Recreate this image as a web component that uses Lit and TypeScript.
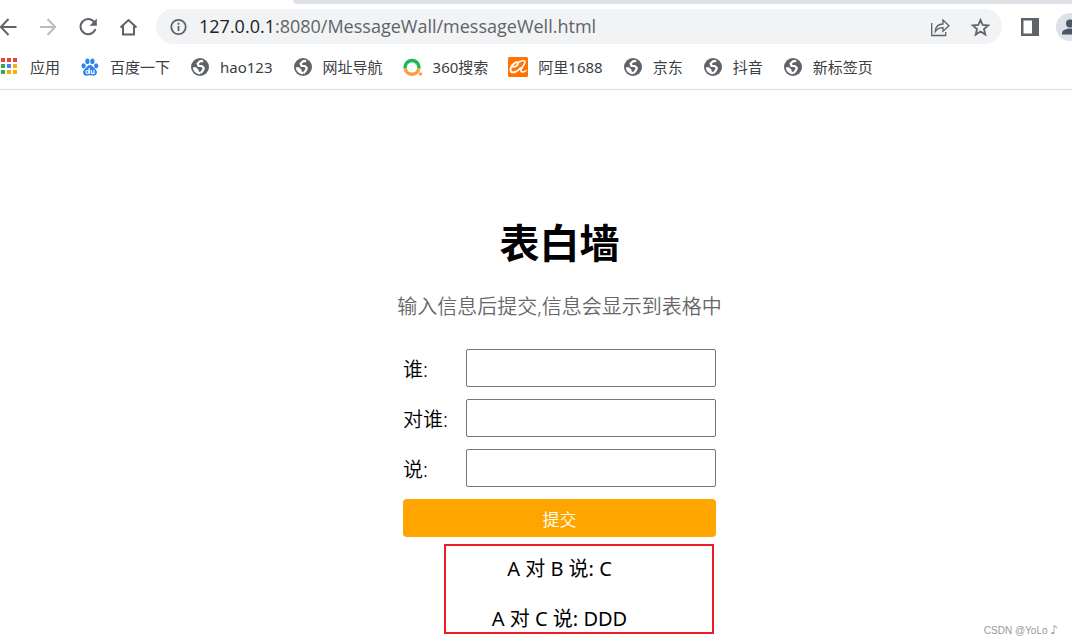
import { LitElement, html, css, svg } from "lit";
import { customElement, state } from "lit/decorators.js";

const globe = svg`<circle cx="10" cy="10" r="9" fill="#5f6368"/>
  <path fill="none" stroke="#fff" stroke-width="2.200" stroke-linejoin="round" d="M13.200 4.200H10.300L7.600 6.500l1 2.500h3.200l2 2-1 2.600-2.300 2.600"/>
  <path fill="#fff" d="M2.800 10.200H6l2.600 2.500v1.600l1.600 1v2.100A7.300 7.300 0 0 1 2.800 10.200z"/>`;

const icons: Record<string, unknown> = {
  apps: svg`${["#ea4335", "#ea4335", "#ea4335", "#34a853", "#4285f4", "#fbaf05", "#34a853", "#fbaf05", "#fbaf05"].map(
    (c, i) => svg`<rect x=${1 + (i % 3) * 6} y=${1 + Math.floor(i / 3) * 6} width="4" height="4" fill=${c}/>`
  )}`,
  baidu: svg`<g fill="#2f82f5"><ellipse cx="3.600" cy="8.800" rx="2.100" ry="2.600"/><ellipse cx="7.400" cy="4.200" rx="2.100" ry="2.800"/><ellipse cx="12.400" cy="4.200" rx="2.100" ry="2.800"/><ellipse cx="16.200" cy="8.800" rx="2.100" ry="2.600"/><path d="M10 8c2.400 0 2.900 2 4.800 3.500 3.700 3 2 7.200-1.200 7.200-1.500 0-2-.4-3.600-.4s-2.100.4-3.600.4c-3.200 0-4.900-4.200-1.200-7.200C7.100 10 7.600 8 10 8z"/></g>
    <g fill="none" stroke="#fff" stroke-width="1.200"><path d="M9.200 11v6"/><circle cx="7.500" cy="15" r="1.500"/><path d="M11.300 13v2.200c0 1.800 2.700 1.800 2.700 0V13v4"/></g>`,
  globe,
  so: svg`<g fill="none" stroke-width="3.400"><path d="M2.200 11.500A6.900 6.900 0 1 1 15.800 11.500" stroke="#19b955"/><path d="M2.200 11.500A6.900 6.900 0 0 0 15.800 11.500" stroke="#fd9f3e"/></g><circle cx="17.500" cy="17" r="1.800" fill="#fd9f3e"/>`,
  ali: svg`<rect width="20" height="20" rx="1.500" fill="#ff7300"/>
    <g fill="none" stroke="#fff" stroke-linecap="round" stroke-linejoin="round"><path stroke-width="1.900" d="M4.500 9.800C8 10 10.300 8 9.800 6 9 4 4.500 6.500 2.800 11c-1.200 4 1.200 5 4.200 4 2.300-.8 4-2.200 5.500-4"/><path stroke-width="1.600" d="M9.500 6C12 4 16 3 17 4.300c.8 1.600-3.500 6-4 8.700-.3 2.600 2.700 2.600 5.200.5"/></g>`,
};

@customElement("app-root")
export class AppRoot extends LitElement {
  static styles = css`
    :host { display: block; overflow: hidden; background: #fff; color: #000;
      font-family: "Noto Sans", "Noto Sans CJK SC", sans-serif; font-size: 20px; }
    * { box-sizing: border-box; }
    svg { display: block; flex: none; }
    button { font-family: inherit; cursor: pointer; }
    .tabs { height: 4px; margin-left: 293px; background: #dee1e6; border-bottom-left-radius: 8px; }
    .toolbar { display: flex; align-items: center; gap: 16px; height: 45px; margin: 0 -12px 0 -4px; }
    .icon { display: block; flex: none; padding: 0; border: 0; background: none; width: 24px; height: 24px; color: #5f6368; }
    .faded { color: #babcbe; }
    .profile { display: flex; align-items: center; gap: 14px; }
    .avatar { width: 28px; height: 28px; }
    .omnibox { flex: 1; min-width: 0; height: 35px; padding: 0 10px 0 12px; border-radius: 18px; background: #f1f3f4;
      display: flex; align-items: center; gap: 16px; }
    .site { flex: 1; display: flex; align-items: center; gap: 11px; min-width: 0; color: #5f6368; }
    .url { font-family: "Open Sans", sans-serif; font-size: 18px; line-height: 24px; padding-bottom: 2px; white-space: nowrap; }
    .host { color: #202124; }
    .bookmarks { display: flex; gap: 20px; align-items: center; height: 41px; padding-bottom: 4px;
      border-bottom: 1px solid #dadce0; }
    .bookmark { display: flex; align-items: center; gap: 10px; font-size: 15px; line-height: 20px; color: #3c4043;
      text-decoration: none; white-space: nowrap; }
    .page { padding: 123px 0 0 47px; display: flex; flex-direction: column; align-items: center; }
    h1 { margin: 0; font-size: 40px; line-height: 60px; font-weight: 700; }
    .hint { margin: 18px 0 0; line-height: 32px; color: #666; font-weight: 350; }
    .form { display: grid; gap: 12px; margin-top: 26px; }
    .row { display: grid; grid-template-columns: 63px 250px; align-items: center; }
    .row label { line-height: 34px; padding-top: 4px; font-weight: 350; }
    .field { height: 38px; width: 100%; border: 1px solid #767676; border-radius: 2px; padding: 1px 4px; font: inherit; background: #fff; }
    .submit { height: 38px; border: 0; border-radius: 4px; background: orange; color: #fff; font-size: 17px; font-weight: 350; padding: 0; }
    .messages { position: relative; width: 313px; padding-top: 7px; text-align: center; }
    .message { margin: 0; line-height: 50px; }
    .frame { position: absolute; inset: 7px 2px 10px 41px; border: 2px solid #ed1c24; pointer-events: none; }
    .credit { position: absolute; right: 14px; bottom: 6px; font: 10px/14px "Liberation Sans", sans-serif; color: #999; }
    .note { font: italic 700 12px/14px "DejaVu Sans", sans-serif; }
  `;

  @state() private messages = [
    { from: "A", to: "B", text: "C" },
    { from: "A", to: "C", text: "DDD" },
  ];

  private submit(e: Event) {
    e.preventDefault();
    const form = e.target as HTMLFormElement;
    const data = new FormData(form);
    const [from, to, text] = ["from", "to", "text"].map((k) => String(data.get(k) ?? ""));
    if (!from || !to || !text) return;
    this.messages = [...this.messages, { from, to, text }];
    form.reset();
  }

  private tool(label: string, art: unknown, extra = "") {
    return html`<button class="icon ${extra}" aria-label=${label}><svg width="24" height="24" viewBox="0 0 24 24" fill="none" stroke="currentColor" stroke-width="2">${art}</svg></button>`;
  }

  private bookmark(icon: string, label: string) {
    return html`<a class="bookmark" href="#"><svg width="20" height="20" viewBox="0 0 20 20">${icons[icon]}</svg><span>${label}</span></a>`;
  }

  private row(name: string, label: string) {
    return html`<div class="row"><label for=${name}>${label}</label><input class="field" id=${name} name=${name} type="text" /></div>`;
  }

  render() {
    return html`
      <div class="tabs"></div>
      <div class="toolbar">
        ${this.tool("后退", svg`<path d="M20.500 12H5M12.500 4 4.800 12l7.700 8"/>`)}
        ${this.tool("前进", svg`<path d="M4 12h15M11.500 4l7.700 8-7.700 8"/>`, "faded")}
        ${this.tool("重新加载", svg`<path d="M18.500 7.500A7.600 7.600 0 1 0 19.400 14"/><path d="M20.800 3.500v7.300h-7.300z" fill="currentColor" stroke="none"/>`)}
        ${this.tool("主页", svg`<path d="M4.500 12.500 12.500 5l8 7.500M7 10.500v9h11v-9"/>`)}
        <div class="omnibox">
          <div class="site">
            <svg width="20" height="20" viewBox="0 0 20 20" fill="none" stroke="currentColor" stroke-width="1.800"><circle cx="10.500" cy="10" r="7.200"/><path d="M10.500 9v5M10.500 5.700v2"/></svg>
            <span class="url"><span class="host">127.0.0.1</span>:8080/MessageWall/messageWell.html</span>
          </div>
          ${this.tool("分享", svg`<g stroke-width="1.300"><path d="M3.700 8v12.500h14V17"/><path d="M7.300 16.500c.3-5 3-7.500 7.700-7.500V5l6 5.800-6 5.500v-3.600c-3.500 0-5.700 1-7.700 3.800z"/></g>`)}
          ${this.tool("收藏", svg`<path stroke-width="1.800" d="m12.500 5 2.200 5 5.500.5-4.200 3.600 1.300 5.400-4.800-2.900-4.800 2.900L9 14.100l-4.200-3.600 5.500-.5z"/>`)}
        </div>
        <div class="profile">
          ${this.tool("侧边栏", svg`<path fill="currentColor" stroke="none" fill-rule="evenodd" d="M3 3h18v18H3zM5.500 5.500v13h8.500v-13z"/>`)}
          <button class="icon avatar" aria-label="用户"><svg width="28" height="28" viewBox="0 0 28 28"><circle cx="14" cy="14" r="14" fill="#dee1e6"/><circle cx="14" cy="10.500" r="4" fill="#4a5568"/><path d="M6 21.500v-1.500c0-3 5-4.500 8-4.500s8 1.500 8 4.500v1.500z" fill="#4a5568"/></svg></button>
        </div>
      </div>
      <nav class="bookmarks">
        ${this.bookmark("apps", "应用")}
        ${this.bookmark("baidu", "百度一下")}
        ${this.bookmark("globe", "hao123")}
        ${this.bookmark("globe", "网址导航")}
        ${this.bookmark("so", "360搜索")}
        ${this.bookmark("ali", "阿里1688")}
        ${this.bookmark("globe", "京东")}
        ${this.bookmark("globe", "抖音")}
        ${this.bookmark("globe", "新标签页")}
      </nav>
      <main class="page">
        <h1>表白墙</h1>
        <p class="hint">输入信息后提交,信息会显示到表格中</p>
        <form class="form" @submit=${this.submit}>
          ${this.row("from", "谁:")} ${this.row("to", "对谁:")} ${this.row("text", "说:")}
          <button class="submit" type="submit">提交</button>
        </form>
        <section class="messages">
          ${this.messages.map((m) => html`<p class="message">${m.from} 对 ${m.to} 说: ${m.text}</p>`)}
          <div class="frame"></div>
        </section>
      </main>
      <div class="credit">CSDN @YoLo <span class="note">♪</span></div>
    `;
  }
}
